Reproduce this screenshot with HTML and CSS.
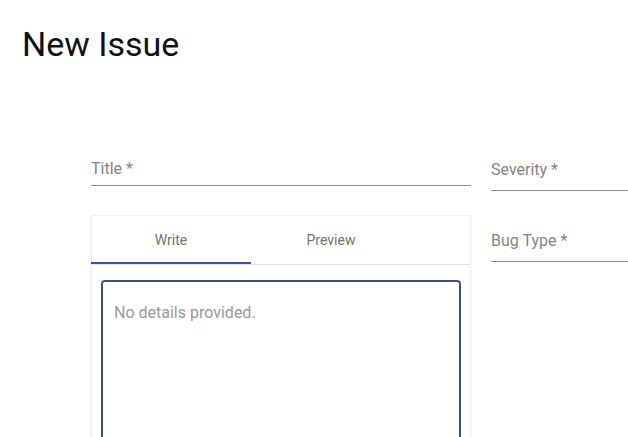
FILE: index.html
```html
<!DOCTYPE html>
<html lang="en">
<head>
<meta charset="utf-8">
<title>New Issue</title>
<link rel="stylesheet" href="styles.css">
</head>
<body>
<div class="page">
  <h1 class="page-title">New Issue</h1>
  <div class="form">
    <div class="col-main">
      <div class="field field-title">
        <span class="label">Title *</span>
      </div>
      <div class="card">
        <div class="tabs">
          <div class="tab tab-active">Write</div>
          <div class="tab">Preview</div>
        </div>
        <div class="card-body">
          <div class="editor">No details provided.</div>
        </div>
      </div>
    </div>
    <div class="col-side">
      <div class="field field-select">
        <span class="label">Severity *</span>
      </div>
      <div class="field field-select field-gap">
        <span class="label">Bug Type *</span>
      </div>
    </div>
  </div>
</div>
</body>
</html>
```

FILE: styles.css
```css
html, body {
  margin: 0;
  padding: 0;
  overflow: hidden;
  background: #ffffff;
}

body {
  font-family: Roboto, "Liberation Sans", sans-serif;
  color: #000;
}

.page {
  padding: 24px 0 0 22px;
  height: 413px;
  overflow: hidden;
}

.page-title {
  margin: 0;
  font-size: 34px;
  line-height: 40px;
  font-weight: 400;
  color: #111;
}

.form {
  display: flex;
  gap: 20px;
  margin-top: 95px;
  margin-left: 69px;
}

.col-main {
  width: 380px;
  flex: none;
  display: flex;
  flex-direction: column;
}

.col-side {
  flex: 1;
  display: flex;
  flex-direction: column;
  padding-top: 1px;
}

.field {
  border-bottom: 1px solid #8d8d8d;
}

.label {
  display: block;
  font-size: 16px;
  line-height: 19px;
  color: #858585;
}

.field-title {
  padding-bottom: 7px;
}

.field-select {
  padding-bottom: 11px;
}

.field-gap {
  margin-top: 40px;
}

.card {
  margin-top: 29px;
  border: 1px solid #efefef;
  box-shadow: 0 1px 2px rgba(0, 0, 0, 0.04);
  box-sizing: border-box;
}

.tabs {
  display: flex;
  border-bottom: 1px solid #e2e2e2;
}

.tab {
  width: 160px;
  height: 48px;
  display: flex;
  align-items: center;
  justify-content: center;
  font-size: 14px;
  color: #737373;
  box-sizing: border-box;
}

.tab-active {
  margin-left: -1px;
  border-bottom: 2px solid #3f51b5;
  padding-top: 2px;
}

.card-body {
  padding: 15px 9px 0;
}

.editor {
  border: 2px solid #3b4f91;
  border-radius: 4px;
  height: 200px;
  padding: 21px 11px;
  font-size: 16px;
  line-height: 19px;
  color: #9a9a9a;
}
```
